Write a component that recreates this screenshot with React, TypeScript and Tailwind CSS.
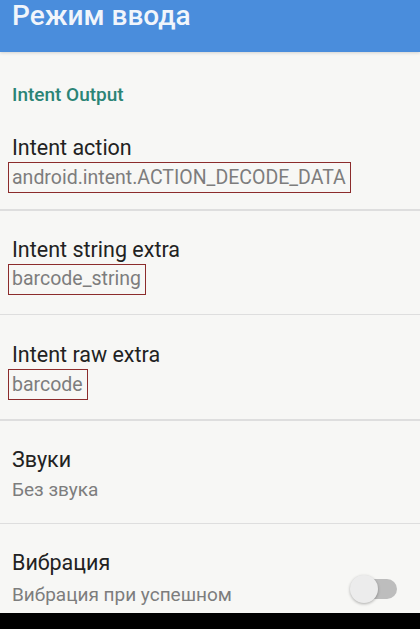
import React from "react";

const font = { fontFamily: "Roboto, 'Noto Sans', sans-serif" };

function Divider() {
  return <div className="h-[1.5px] bg-[#dedede]" />;
}

function BoxedRow({ title, value, pt, pb }: { title: string; value: string; pt: string; pb: string }) {
  return (
    <div className={`px-[12px] ${pt} ${pb}`}>
      <div className="text-[21.5px] leading-[26px] text-[#222222]">{title}</div>
      <div className="mt-[1px] -ml-[4px] inline-flex h-[31px] items-center border-[1.5px] border-[#8c2c2c] pl-[3px] pr-[4px]">
        <span className="text-[19.5px] leading-[22px] text-[#7d7d7d]">{value}</span>
      </div>
    </div>
  );
}

export default function App() {
  return (
    <div className="flex h-[629px] w-[420px] flex-col overflow-hidden bg-[#f7f7f5]" style={font}>
      <div className="h-[52px] shrink-0 bg-[#4a8ddc] pl-[12px] shadow-[0_1px_3px_rgba(0,0,0,0.15)]">
        <div className="text-[28px] font-medium leading-[31px] text-[#f1f5fb]">Режим ввода</div>
      </div>
      <div className="flex-1 overflow-hidden">
        <div className="px-[12px] pt-[32px]">
          <div className="text-[19px] font-medium leading-[22px] text-[#2b8476]">Intent Output</div>
        </div>
        <BoxedRow title="Intent action" value="android.intent.ACTION_DECODE_DATA" pt="pt-[29px]" pb="pb-[16px]" />
        <Divider />
        <BoxedRow title="Intent string extra" value="barcode_string" pt="pt-[26px]" pb="pb-[19px]" />
        <Divider />
        <BoxedRow title="Intent raw extra" value="barcode" pt="pt-[27px]" pb="pb-[19px]" />
        <Divider />
        <div className="px-[12px] pt-[26px] pb-[22px]">
          <div className="text-[21.5px] leading-[26px] text-[#222222]">Звуки</div>
          <div className="mt-[6px] text-[19px] leading-[22px] text-[#7d7d7d]">Без звука</div>
        </div>
        <Divider />
        <div className="flex items-start pl-[12px] pr-[23px] pt-[26px]">
          <div className="flex-1">
            <div className="text-[21.5px] leading-[26px] text-[#222222]">Вибрация</div>
            <div className="mt-[7px] w-[250px] text-[19px] leading-[24px] text-[#7d7d7d]">
              Вибрация при успешном сканировании
            </div>
          </div>
          <div className="relative mt-[29px] h-[20px] w-[46px] rounded-full bg-[#bdbdbd]">
            <div className="absolute -left-[1px] -top-[4px] h-[28px] w-[28px] rounded-full bg-[#ececec] shadow-[0_1px_3px_rgba(0,0,0,0.3)]" />
          </div>
        </div>
      </div>
      <div className="h-[16px] shrink-0 bg-black" />
    </div>
  );
}
